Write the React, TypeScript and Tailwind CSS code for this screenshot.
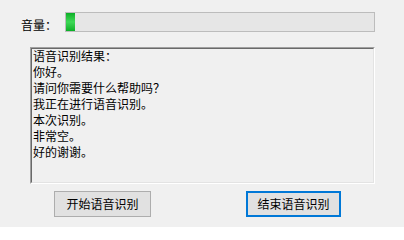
import React from "react";

const lines = [
  "语音识别结果：",
  "你好。",
  "请问你需要什么帮助吗？",
  "我正在进行语音识别。",
  "本次识别。",
  "非常空。",
  "好的谢谢。",
];

export default function App() {
  const font = { fontFamily: '"Noto Sans CJK SC", "Noto Sans", sans-serif' };

  return (
    <div
      className="flex h-[227px] w-[404px] flex-col bg-[#f0f0f0] text-[12px] leading-[16px] text-black"
      style={font}
    >
      {/* volume row */}
      <div className="flex items-start pl-[21px] pt-[12px]">
        <span className="w-[44px] pt-[5px]">音量：</span>
        <div className="flex h-[20px] w-[310px] border border-[#bcbcbc] bg-[#e6e6e6]">
          <div className="h-full w-[9px] bg-gradient-to-b from-[#06b025] via-[#3dd856] to-[#06b025]" />
        </div>
      </div>

      {/* result box */}
      <div className="ml-[30px] mt-[14px] h-[137px] w-[345px] border border-t-[#a0a0a0] border-l-[#a0a0a0] border-b-white border-r-white">
        <div className="h-full w-full border border-t-[#696969] border-l-[#696969] border-b-[#e3e3e3] border-r-[#e3e3e3] bg-[#f0f0f0] pl-[1px] -mt-0">
          <div className="-mt-[1px]">
            {lines.map((l) => (
              <div key={l} className="h-[16px]">
                {l}
              </div>
            ))}
          </div>
        </div>
      </div>

      {/* buttons */}
      <div className="mt-[7px] flex">
        <button className="ml-[54px] flex h-[26px] w-[97px] items-center justify-center border border-[#adadad] bg-[#e1e1e1]">
          开始语音识别
        </button>
        <button className="ml-[95px] flex h-[26px] w-[95px] items-center justify-center border-2 border-[#0078d7] bg-[#e1e1e1]">
          结束语音识别
        </button>
      </div>
    </div>
  );
}
